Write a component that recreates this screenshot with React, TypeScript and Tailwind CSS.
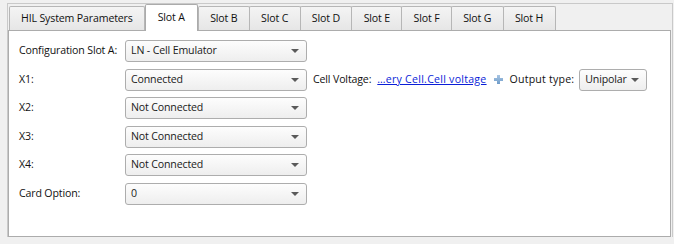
import React from 'react';

const tabs = ['HIL System Parameters', 'Slot A', 'Slot B', 'Slot C', 'Slot D', 'Slot E', 'Slot F', 'Slot G', 'Slot H'];

function Combo({ value, width = 'w-[182px]' }: { value: string; width?: string }) {
  return (
    <div
      className={`${width} h-[22px] flex items-center justify-between pl-[5px] pr-[7px] border border-[#adadad] rounded-[3px] bg-gradient-to-b from-[#fdfdfd] to-[#eeeeee] text-[#1a1a1a]`}
    >
      <span className="whitespace-nowrap">{value}</span>
      <svg width="8" height="4" viewBox="0 0 8 4" className="shrink-0">
        <path d="M0 0 H8 L4 4 Z" fill="#5a5a5a" />
      </svg>
    </div>
  );
}

function PlusIcon() {
  return (
    <svg width="9" height="9" viewBox="0 0 9 9">
      <defs>
        <linearGradient id="pg" x1="0" y1="0" x2="0" y2="1">
          <stop offset="0" stopColor="#a9c6e4" />
          <stop offset="1" stopColor="#6f9cc9" />
        </linearGradient>
      </defs>
      <path d="M3 0 H6 V3 H9 V6 H6 V9 H3 V6 H0 V3 H3 Z" fill="url(#pg)" />
    </svg>
  );
}

const rows = [
  { label: 'Configuration Slot A:', value: 'LN - Cell Emulator' },
  { label: 'X1:', value: 'Connected', extra: true },
  { label: 'X2:', value: 'Not Connected' },
  { label: 'X3:', value: 'Not Connected' },
  { label: 'X4:', value: 'Not Connected' },
  { label: 'Card Option:', value: '0' },
];

export default function App() {
  return (
    <div
      className="w-[674px] h-[244px] bg-[#f0f0f0] pt-[3px] text-[10.6px] tracking-[-0.15px] text-[#111]"
      style={{ fontFamily: '"Open Sans", "Noto Sans", sans-serif' }}
    >
      <div className="ml-[7px] mr-[1px] h-[234px] border-t border-x border-[#c9c9c9] pr-[1px] flex flex-col">
        {/* tab bar */}
        <div className="flex items-end h-[26px] pl-[1px] relative z-10">
          {tabs.map((t, i) =>
            i === 1 ? (
              <div
                key={t}
                className="h-[27px] -mb-px px-[12px] flex items-center border border-b-0 border-[#ababab] rounded-t-[2px] bg-white whitespace-nowrap"
              >
                {t}
              </div>
            ) : (
              <div
                key={t}
                className={`h-[24px] flex items-center border border-[#b6b6b6] border-b-0 rounded-t-[2px] bg-gradient-to-b from-[#f4f4f4] to-[#e6e6e6] whitespace-nowrap ${
                  i === 0 ? 'px-[11px]' : 'px-[11.3px]'
                } ${i > 2 ? '-ml-px' : ''}`}
              >
                {t}
              </div>
            )
          )}
        </div>
        {/* pane */}
        <div className="flex-1 border border-[#acacac] bg-white pl-[10px] pt-[9px]">
          <div className="grid grid-cols-[106px_auto] gap-y-[6.5px] items-center">
            {rows.map((r) => (
              <React.Fragment key={r.label}>
                <div className="whitespace-nowrap">{r.label}</div>
                <div className="flex items-center">
                  <Combo value={r.value} />
                  {r.extra && (
                    <div className="flex items-center ml-[6px] whitespace-nowrap">
                      <span>Cell Voltage:</span>
                      <a className="ml-[6px] text-[#0a1ed8] underline tracking-[0.25px]">…ery Cell.Cell voltage</a>
                      <span className="ml-[7px] mr-[7px] flex">
                        <PlusIcon />
                      </span>
                      <span className="tracking-[0.2px]">Output type:</span>
                      <div className="ml-[5px]">
                        <Combo value="Unipolar" width="w-[68px]" />
                      </div>
                    </div>
                  )}
                </div>
              </React.Fragment>
            ))}
          </div>
        </div>
      </div>
    </div>
  );
}
